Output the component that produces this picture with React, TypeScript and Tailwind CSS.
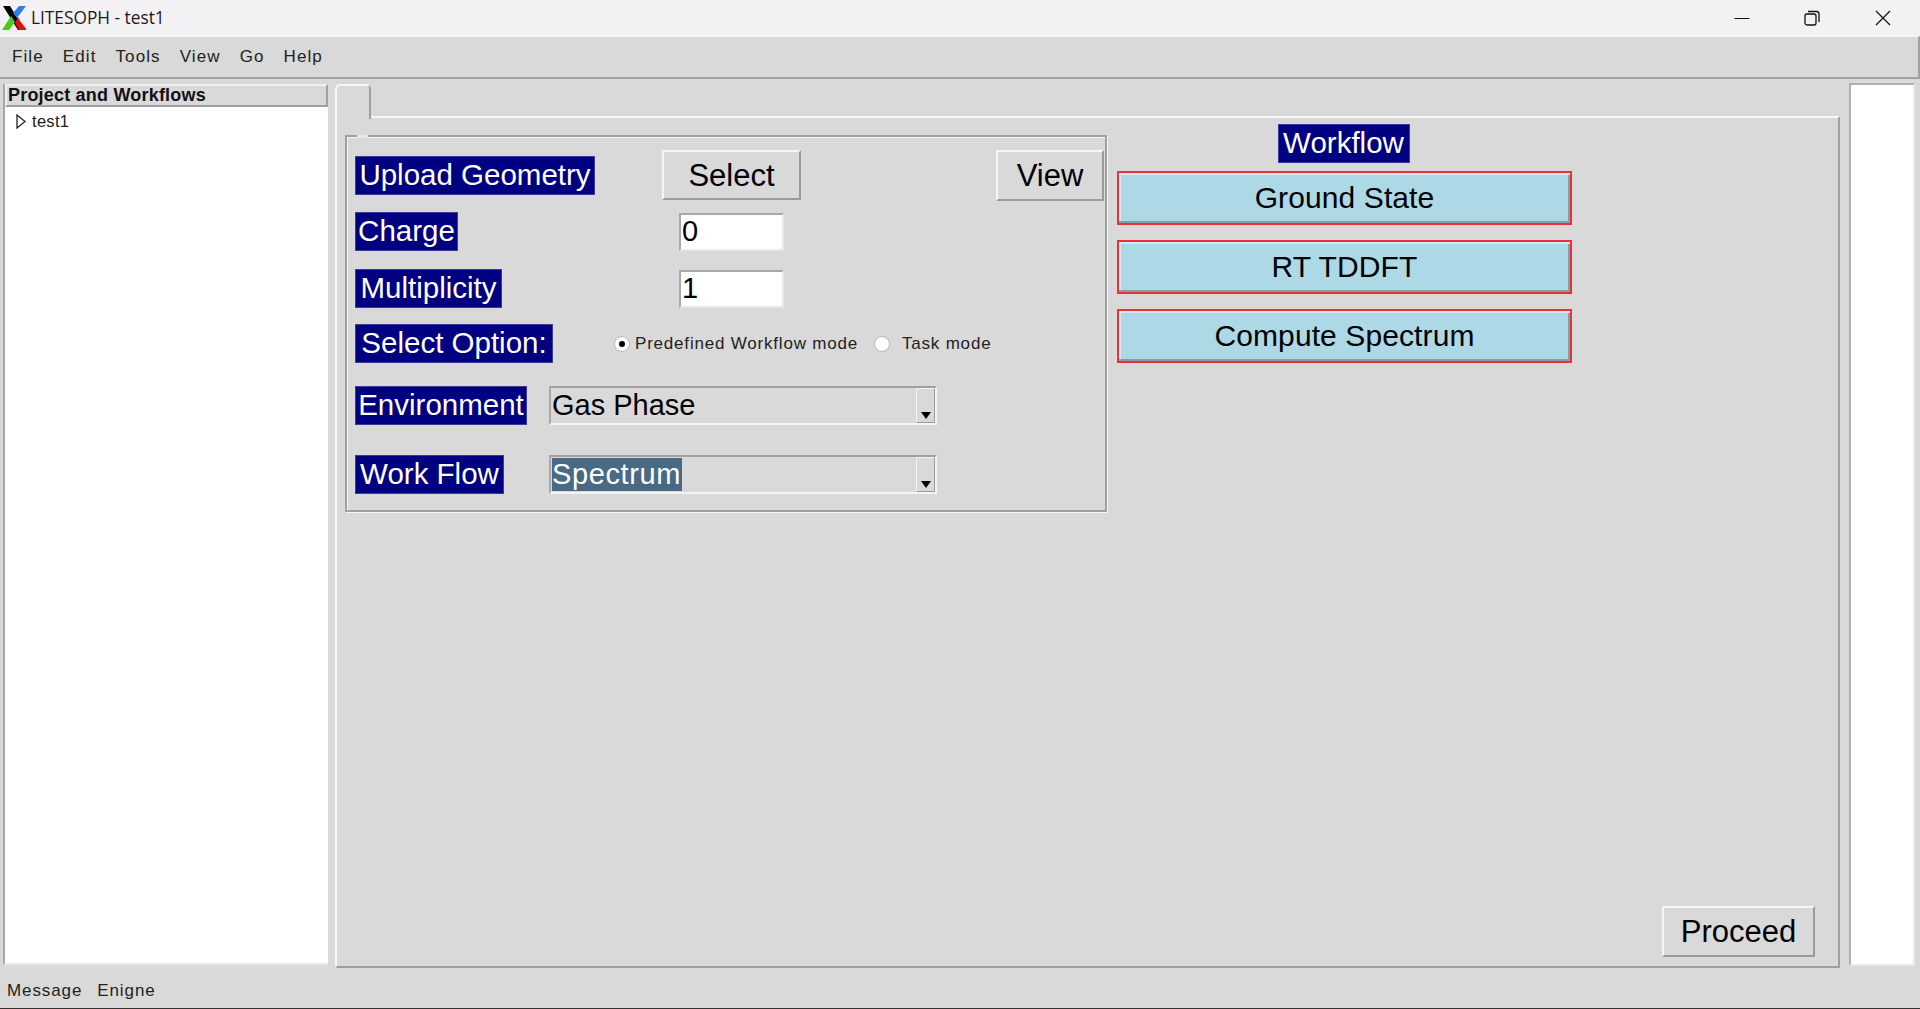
import React from "react";

const font = { fontFamily: '"Liberation Sans", Arial, sans-serif' };

function Tag({ children, className = "" }: { children: React.ReactNode; className?: string }) {
  return (
    <div className={`h-[39px] pb-[2px] flex items-center justify-center bg-[#000080] text-white text-[29.5px] leading-none whitespace-nowrap border border-[#3a3a9a] ${className}`}>
      {children}
    </div>
  );
}

function RaisedButton({ children, className = "" }: { children: React.ReactNode; className?: string }) {
  return (
    <div className={`flex items-center justify-center text-[31px] text-black leading-none bg-[#d9d9d9] border-2 border-t-[#f6f6f6] border-l-[#f6f6f6] border-r-[#9a9a9a] border-b-[#9a9a9a] ${className}`}>
      {children}
    </div>
  );
}

function Entry({ value }: { value: string }) {
  return (
    <div className="w-[105px] h-[38px] bg-white border-2 border-t-[#a8a8a8] border-l-[#a8a8a8] border-r-[#e8e8e8] border-b-[#e8e8e8] flex items-center pl-[1px] text-[29px] leading-none text-black">
      {value}
    </div>
  );
}

function Combo({ value, selected }: { value: string; selected?: boolean }) {
  return (
    <div className="w-[388px] h-[39px] flex items-center justify-between bg-[#d9d9d9] border-2 border-t-[#a0a0a0] border-l-[#a8a8a8] border-r-[#f4f4f4] border-b-[#f4f4f4] text-[29px] leading-none">
      <div className={`h-[33px] pb-[1px] ml-[1px] flex items-center ${selected ? "bg-[#486a85] text-white w-[130px] tracking-[0.6px]" : "text-black"}`}>{value}</div>
      <div className="w-[19px] h-[35px] flex items-end justify-center pb-[3px] border border-t-[#f4f4f4] border-l-[#f4f4f4] border-r-[#9a9a9a] border-b-[#9a9a9a]">
        <svg width="10" height="7" viewBox="0 0 10 7"><path d="M0 0H10L5 7Z" fill="#000" /></svg>
      </div>
    </div>
  );
}

function Radio({ checked }: { checked?: boolean }) {
  return (
    <div className="w-[16px] h-[16px] rounded-full bg-white border border-[#b8b8b8] flex items-center justify-center">
      {checked && <div className="w-[6px] h-[6px] rounded-full bg-black" />}
    </div>
  );
}

function WfButton({ children }: { children: React.ReactNode }) {
  return (
    <div className="w-[455px] h-[54px] pb-[1px] border-2 border-[#f03030] bg-[#add8e6] flex items-center justify-center text-[30px] tracking-[0.1px] leading-none text-black shadow-[inset_0_-2px_0_#7f9faa,inset_0_2px_0_#cfeaf3,inset_2px_0_0_#cfeaf3,inset_-2px_0_0_#7f9faa]">
      {children}
    </div>
  );
}

export default function App() {
  return (
    <div className="w-[1920px] h-[1009px] flex flex-col overflow-hidden bg-[#d9d9d9]" style={font}>
      {/* title bar */}
      <div className="h-[36px] shrink-0 bg-[#f3f1f3] flex items-center justify-between">
        <div className="flex items-center">
          <svg className="ml-[2px]" width="24" height="26" viewBox="0 0 24 26">
            <path d="M1 1H8L23 25H16Z" fill="#000" />
            <path d="M16 12L18 16L25 25H17L13 18Z" fill="#e01010" />
            <path d="M17 1H24L15 13L11 8Z" fill="#2f7fe8" />
            <path d="M9 11L13 17L7 25H0Z" fill="#4fc81e" />
          </svg>
          <span className="ml-[5px] text-[17.3px] text-[#1a1a1a] whitespace-nowrap" style={{ fontFamily: '"Open Sans", sans-serif' }}>LITESOPH - test1</span>
        </div>
        <div className="flex items-center">
          <svg className="mr-[54px]" width="16" height="16" viewBox="0 0 16 16"><path d="M0.5 8.5H15.5" stroke="#111" strokeWidth="1" /></svg>
          <svg className="mr-[55px]" width="16" height="16" viewBox="0 0 16 16" fill="none" stroke="#111" strokeWidth="1.3"><rect x="1" y="4" width="11" height="11" rx="2" /><path d="M4 1.5H12.5A2.5 2.5 0 0 1 15 4V12" /></svg>
          <svg className="mr-[29px]" width="16" height="16" viewBox="0 0 16 16" stroke="#111" strokeWidth="1.2"><path d="M1 1L15 15M15 1L1 15" /></svg>
        </div>
      </div>

      {/* menu */}
      <div className="h-[43px] shrink-0 flex items-center pl-[12px] gap-[19px] text-[17px] tracking-[1.1px] text-[#222] bg-[#d9d9d9] border-t border-t-[#f4f4f4] border-b-2 border-b-[#a0a0a0] border-r-2 border-r-[#a0a0a0]">
        <span>File</span>
        <span>Edit</span>
        <span>Tools</span>
        <span>View</span>
        <span>Go</span>
        <span>Help</span>
      </div>

      {/* body */}
      <div className="h-[889px] shrink-0 flex pt-[5px]">
        {/* tree */}
        <div className="ml-[3px] w-[325px] h-[881px] bg-white border-l-2 border-l-[#a8a8a8] border-b-2 border-b-[#e8e8e8] flex flex-col">
          <div className="h-[23px] shrink-0 pl-[1px] pb-[2px] bg-[#d9d9d9] border-2 border-t-[#f0f0f0] border-l-[#f0f0f0] border-r-[#a0a0a0] border-b-[#a0a0a0] flex items-center text-[18px] tracking-[0.2px] font-bold text-[#111] leading-none">
            Project and Workflows
          </div>
          <div className="flex items-center h-[28px] pl-[11px] text-[16.5px] tracking-[0.3px] text-[#222]">
            <svg width="10" height="15" viewBox="0 0 10 15" fill="none" stroke="#222" strokeWidth="1.3"><path d="M1 1L9 7.5L1 14Z" /></svg>
            <span className="ml-[6px]">test1</span>
          </div>
        </div>

        {/* notebook */}
        <div className="ml-[7px] w-[1505px] h-[884px] flex flex-col">
          <div className="relative z-10 w-[36px] h-[35px] shrink-0 bg-[#d9d9d9] border-t-2 border-l-2 border-r-2 border-t-[#f6f6f6] border-l-[#f6f6f6] border-r-[#a0a0a0] rounded-t-[5px]" />
          <div className="flex-1 flex flex-col border-2 border-t-[#f6f6f6] border-l-[#f6f6f6] border-r-[#a0a0a0] border-b-[#a0a0a0] px-[8px] pb-[8px] -mt-[3px]">
            <div className="flex items-start">
              {/* form frame */}
              <div className="relative mt-[17px] w-[762px] h-[377px] shrink-0 border-2 border-[#a0a0a0] shadow-[inset_1px_1px_0_#f6f6f6,1px_1px_0_#f6f6f6] flex flex-col pl-[8px] pt-[13px]">
                <div className="absolute -top-[2px] left-[10px] w-[11px] h-[3px] bg-[#e6e6e6]" />
                <div className="flex items-start">
                  <Tag className="mt-[6px] w-[240px]">Upload Geometry</Tag>
                  <RaisedButton className="ml-[67px] w-[139px] h-[50px]">Select</RaisedButton>
                  <RaisedButton className="ml-[195px] w-[108px] h-[51px]">View</RaisedButton>
                </div>
                <div className="mt-[11px] flex items-center">
                  <Tag className="w-[103px]">Charge</Tag>
                  <div className="ml-[221px]"><Entry value="0" /></div>
                </div>
                <div className="mt-[18px] flex items-center">
                  <Tag className="w-[147px]">Multiplicity</Tag>
                  <div className="ml-[177px]"><Entry value="1" /></div>
                </div>
                <div className="mt-[16px] flex items-center">
                  <Tag className="w-[198px]">Select Option:</Tag>
                  <div className="ml-[61px] mt-[1px] flex items-center text-[17px] tracking-[0.8px] text-[#222] whitespace-nowrap">
                    <Radio checked />
                    <span className="ml-[5px]">Predefined Workflow mode</span>
                    <div className="ml-[16px]"><Radio /></div>
                    <span className="ml-[12px]">Task mode</span>
                  </div>
                </div>
                <div className="mt-[23px] flex items-center">
                  <Tag className="w-[172px]">Environment</Tag>
                  <div className="ml-[22px]"><Combo value="Gas Phase" /></div>
                </div>
                <div className="mt-[30px] flex items-center">
                  <Tag className="w-[149px]">Work Flow</Tag>
                  <div className="ml-[45px]"><Combo value="Spectrum" selected /></div>
                </div>
              </div>

              {/* workflow column */}
              <div className="ml-[10px] mt-[6px] flex flex-col items-center">
                <Tag className="w-[132px] mr-[2px]">Workflow</Tag>
                <div className="mt-[8px] flex flex-col gap-[15px]">
                  <WfButton>Ground State</WfButton>
                  <WfButton>RT TDDFT</WfButton>
                  <WfButton>Compute Spectrum</WfButton>
                </div>
              </div>
            </div>
            <div className="mt-auto flex justify-end pr-[15px] pb-[1px]">
              <RaisedButton className="w-[153px] h-[51px]">Proceed</RaisedButton>
            </div>
          </div>
        </div>

        {/* right white */}
        <div className="ml-[9px] -mt-[1px] w-[66px] h-[883px] bg-white border-t-2 border-l-2 border-t-[#b0b0b0] border-l-[#b0b0b0] border-r-2 border-r-[#e8e8e8] border-b-2 border-b-[#e8e8e8]" />
      </div>

      {/* status */}
      <div className="flex-1 flex items-center pl-[7px] pt-[6px] gap-[15px] text-[17px] tracking-[0.9px] text-[#222] border-b border-b-[#333]">
        <span>Message</span>
        <span>Enigne</span>
      </div>
    </div>
  );
}
